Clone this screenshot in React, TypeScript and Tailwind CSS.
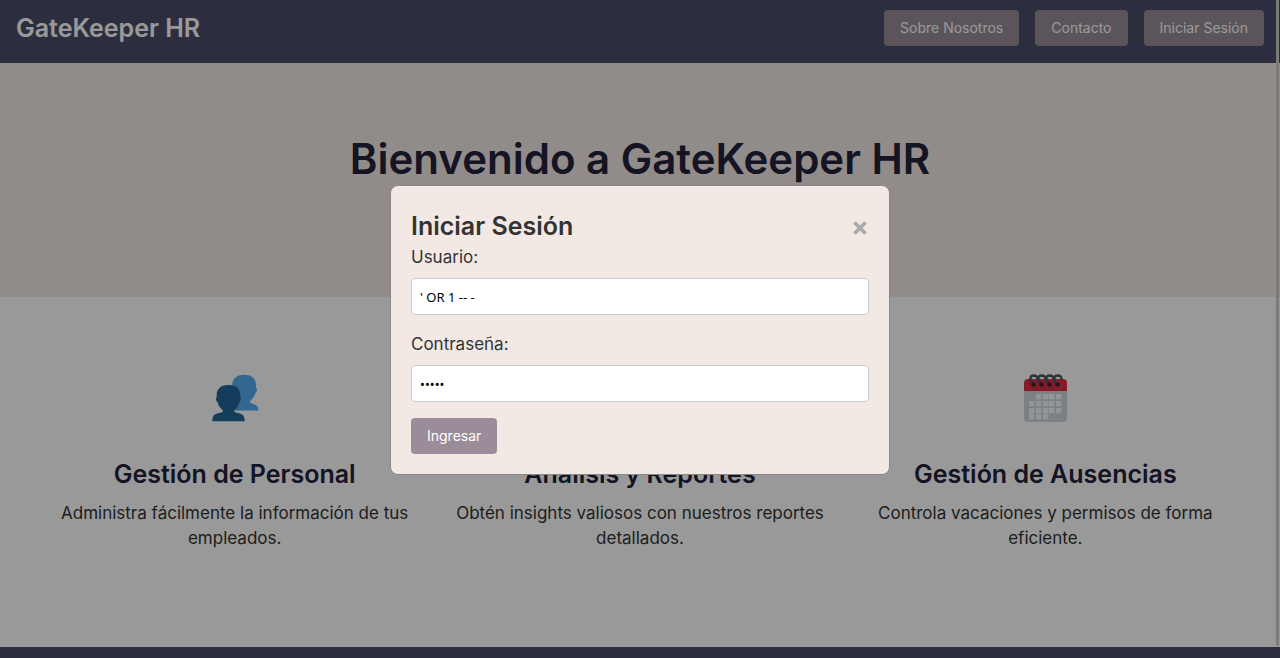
import { useState } from "react";

const navItems = ["Sobre Nosotros", "Contacto", "Iniciar Sesión"];

function PeopleIcon() {
  return (
    <svg viewBox="0 0 48 48" className="size-12" aria-hidden="true">
      <path
        fill="#55acee"
        d="M18 36.500V31l6-6-2-4.500-.8-10C21.500 4 26.500.8 33.500.8c8 0 11.500 4.700 11.500 10.200v2.500c1.400.8 1.200 3.800-.6 5.500-.8 3.500-2.800 6-5.200 7.800-.4 1.200.2 2.200 1.600 2.600 3.200.8 6.600 2 6.600 7.100z"
      />
      <path
        fill="#226699"
        d="M1.300 47.300c0-6 2.700-7.300 6-8 3.200-.7 4.900-1.300 4.500-3.100-2.700-2-4.400-4.600-5-7.700-1.800-1.200-2.400-4.500-1-5.500-.8-7.500 3.200-12 11.700-12s12.500 4.500 11.700 12c1.400 1 .8 4.300-1 5.500-.6 3.100-2.300 5.700-5 7.700-.4 1.800 1.300 2.400 4.500 3.100 3.300.7 6 2 6 8z"
      />
    </svg>
  );
}

function ChartIcon() {
  return (
    <svg viewBox="0 0 48 48" className="size-12" aria-hidden="true">
      <rect x="2" y="2" width="44" height="44" rx="3" fill="#ccd6dd" />
      <path fill="#5c913b" d="M8 22h8v20H8z" />
      <path fill="#3b94d9" d="M20 8h8v34h-8z" />
      <path fill="#dd2e44" d="M32 16h8v26h-8z" />
    </svg>
  );
}

const calendarCells = [
  [15, 20], [22, 20], [28, 20], [35, 20],
  [8, 27], [15, 27], [22, 27], [28, 27], [35, 27],
  [8, 34], [15, 34], [22, 34], [28, 34], [35, 34],
  [8, 40], [15, 40], [22, 40],
];

function CalendarIcon() {
  return (
    <svg viewBox="0 0 48 48" className="size-12" aria-hidden="true">
      <path fill="#ccd6dd" d="M3 16h43v28c0 2.500-1.500 4-4 4H7c-2.500 0-4-1.500-4-4z" />
      <path fill="#dd2e44" d="M3 17V9c0-2.500 1.500-4 4-4h35c2.500 0 4 1.500 4 4v8z" />
      {calendarCells.map(([x, y]) => (
        <rect key={`${x}-${y}`} x={x} y={y} width="5.400" height="5.400" fill="#f5f8fa" />
      ))}
      <g fill="none" stroke="#4a5960" strokeWidth="2.400" strokeLinecap="round">
        <path d="M11.500 10.500C8 6 9 1.500 12.500 1.500c2.500 0 4 1.500 4 3.500" />
        <path d="M19.500 10.500C16 6 17 1.500 20.500 1.500c2.500 0 4 1.500 4 3.500" />
        <path d="M27.500 10.500C24 6 25 1.500 28.500 1.500c2.500 0 4 1.500 4 3.500" />
        <path d="M35.500 10.500C32 6 33 1.500 36.500 1.500c2.500 0 4 1.500 4 3.500" />
      </g>
      <g fill="#292f33">
        <circle cx="12.500" cy="10.500" r="2.300" />
        <circle cx="20.500" cy="10.500" r="2.300" />
        <circle cx="28.500" cy="10.500" r="2.300" />
        <circle cx="36.500" cy="10.500" r="2.300" />
      </g>
    </svg>
  );
}

const features = [
  {
    icon: <PeopleIcon />,
    title: "Gestión de Personal",
    text: "Administra fácilmente la información de tus empleados.",
  },
  {
    icon: <ChartIcon />,
    title: "Análisis y Reportes",
    text: "Obtén insights valiosos con nuestros reportes detallados.",
  },
  {
    icon: <CalendarIcon />,
    title: "Gestión de Ausencias",
    text: "Controla vacaciones y permisos de forma eficiente.",
  },
];

const inputClass =
  "block h-[37px] w-full rounded border border-[#ccc] bg-white px-2 font-['Noto_Sans',sans-serif] text-[13px] text-black outline-none";

function LoginDialog() {
  const [user, setUser] = useState("' OR 1 -- -");
  const [password, setPassword] = useState("admin");

  return (
    <div className="fixed inset-0 flex items-start justify-center bg-black/40 pt-[185px]">
      <div
        role="dialog"
        aria-labelledby="login-title"
        className="w-[500px] max-w-full rounded-lg border border-[#888] bg-[#f2e9e4] p-5"
      >
        <div className="flex items-center justify-between">
          <h2 id="login-title" className="text-[25px] leading-10 font-semibold">
            Iniciar Sesión
          </h2>
          <button type="button" aria-label="Cerrar" className="mt-1 p-0.5 text-[#aaa]">
            <svg viewBox="0 0 14 14" className="size-3.5" aria-hidden="true">
              <path d="M1.500 1.500l11 11M12.500 1.500l-11 11" stroke="currentColor" strokeWidth="3.800" />
            </svg>
          </button>
        </div>
        <form onSubmit={(event) => event.preventDefault()}>
          <label htmlFor="user" className="mb-2.5 block leading-[22px]">
            Usuario:
          </label>
          <input
            id="user"
            type="text"
            value={user}
            onChange={(event) => setUser(event.target.value)}
            className={inputClass}
          />
          <label htmlFor="password" className="mt-[18px] mb-2.5 block leading-[22px]">
            Contraseña:
          </label>
          <input
            id="password"
            type="password"
            value={password}
            onChange={(event) => setPassword(event.target.value)}
            className={inputClass}
          />
          <button
            type="submit"
            className="mt-4 h-9 rounded bg-[#9a8c98] px-4 text-sm text-white"
          >
            Ingresar
          </button>
        </form>
      </div>
    </div>
  );
}

export default function App() {
  return (
    <div className="relative flex h-screen flex-col overflow-hidden bg-white font-['Inter',sans-serif] text-[17px] text-[#333]">
      <header className="flex shrink-0 items-start justify-between bg-[#4a4e69] px-4 pt-2.5 pb-[17px]">
        <div className="text-[25px] leading-9 font-semibold text-white">GateKeeper HR</div>
        <nav className="flex gap-4">
          {navItems.map((item) => (
            <button
              key={item}
              type="button"
              className="h-9 rounded bg-[#9a8c98] px-4 text-sm text-white"
            >
              {item}
            </button>
          ))}
        </nav>
      </header>

      <section className="h-[234px] shrink-0 bg-[#f2e9e4] px-8 pt-16 text-center">
        <h1 className="text-[42px] leading-[64px] font-semibold text-[#22223b]">
          Bienvenido a GateKeeper HR
        </h1>
      </section>

      <section className="grid h-[350px] shrink-0 grid-cols-3 px-8 pt-[77px] text-center">
        {features.map((feature) => (
          <article key={feature.title} className="flex flex-col items-center px-4">
            {feature.icon}
            <h3 className="mt-8 mb-[7px] text-[25px] leading-10 font-semibold text-[#22223b]">
              {feature.title}
            </h3>
            <p className="leading-[25px]">{feature.text}</p>
          </article>
        ))}
      </section>

      <footer className="flex-1 bg-[#4a4e69]" />

      <div className="absolute top-0 right-px h-[646px] w-[3px] rounded-b bg-[#cfcfc6]" />

      <LoginDialog />
    </div>
  );
}
